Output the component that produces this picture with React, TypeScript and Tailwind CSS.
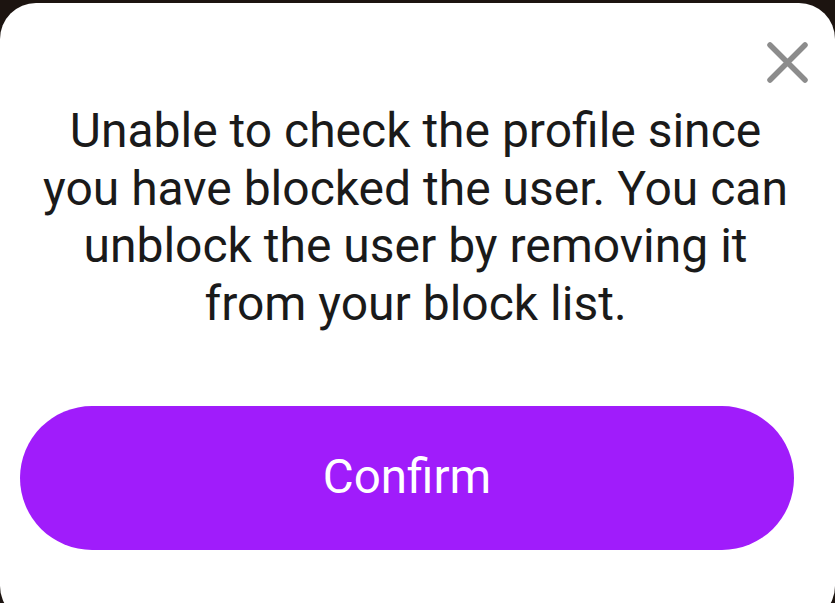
export default function App() {
  return (
    <div className="h-[603px] w-[835px] overflow-hidden bg-[#1c1410]">
      <div
        className="mt-[3px] h-[619px] rounded-[36px] bg-white px-5 pt-[39px]"
        style={{ fontFamily: "Roboto, 'Noto Sans', sans-serif" }}
      >
        <div className="flex justify-end pr-[7px]">
          <button className="h-[41px] w-[41px]" aria-label="Close">
            <svg viewBox="0 0 41 41" className="h-[41px] w-[41px]">
              <path
                d="M3 3 L38 38 M38 3 L3 38"
                stroke="#8c8c8c"
                strokeWidth="5.5"
                strokeLinecap="round"
              />
            </svg>
          </button>
        </div>
        <p className="mx-auto mt-[19px] w-[760px] -translate-x-[2px] text-center text-[48px] leading-[57.5px] text-[#1a1a1a]">
          Unable to check the profile since you have blocked the user. You can
          unblock the user by removing it from your block list.
        </p>
        <button className="mt-[74px] h-[144px] w-[774px] rounded-full bg-[#a01cfb] text-[47.5px] text-white">
          Confirm
        </button>
      </div>
    </div>
  );
}
